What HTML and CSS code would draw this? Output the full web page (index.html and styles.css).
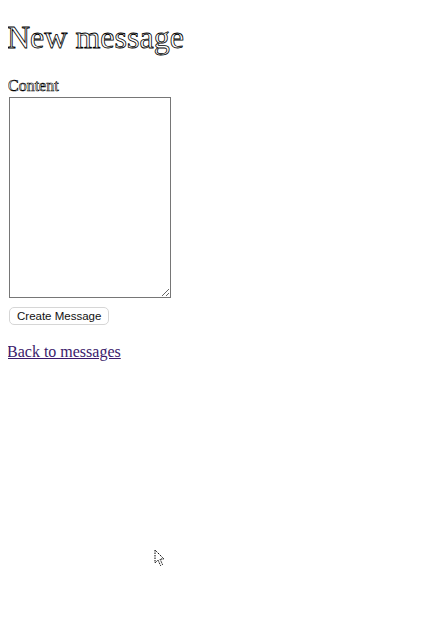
FILE: index.html
```html
<!DOCTYPE html>
<html>
<head>
<meta charset="utf-8">
<title>New message</title>
<link rel="stylesheet" href="styles.css">
</head>
<body>
<h1 class="title">New message</h1>
<form class="form">
  <div class="field">
    <label class="label" for="content">Content</label><br>
    <textarea class="textarea" id="content"></textarea>
  </div>
  <div class="actions">
    <input class="submit" type="submit" value="Create Message">
  </div>
</form>
<br>
<div class="back">
  <a class="link" href="#">Back to messages</a>
</div>
<svg class="cursor" width="12" height="18" viewBox="0 0 12 18"><path d="M1 1 L1 14 L4 11 L6.5 16.5 L8.5 15.5 L6 10 L10 10 Z" fill="#fff" stroke="#000" stroke-width="1" stroke-dasharray="1.5 1"/></svg>
</body>
</html>
```
FILE: styles.css
```css
html, body {
  background: #fff;
}
body {
  margin: 8px;
  font-family: "Liberation Serif", serif;
  font-size: 16px;
  color: #000;
}
.title {
  font-size: 32px;
  font-weight: normal;
  margin: 10.5px 0 21.44px -1px;
  color: #fff;
  -webkit-text-stroke: 0.8px #000;
}
.form {
  margin: 0;
}
.label {
  color: #fff;
  -webkit-text-stroke: 0.6px #000;
}
.textarea {
  box-sizing: border-box;
  width: 162px;
  height: 201px;
  margin: 2px 0 0 1px;
  border: 1px solid #767676;
  padding: 2px;
  background: #fff;
}
.actions {
  margin-top: 4px;
}
.submit {
  font-family: "Liberation Sans", Arial, sans-serif;
  font-size: 11.5px;
  margin: 0 0 0 1px;
  padding: 1px 7px;
  height: 18px;
  background: #fff;
  border: 1px solid #d6d6d6;
  border-radius: 5px;
  color: #111;
}
.back {
  margin-left: -1px;
}
.link {
  color: #3b1a6b;
}
.cursor {
  position: absolute;
  left: 154px;
  top: 549px;
}
```
